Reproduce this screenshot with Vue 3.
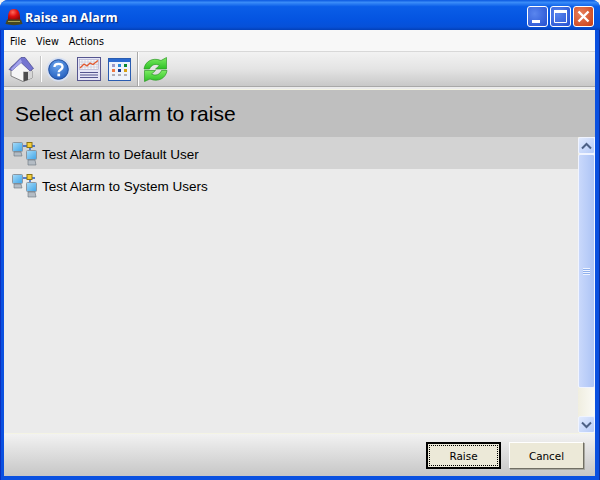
<template>
  <div class="window">
    <div class="title-bar">
      <svg class="alarm-icon" width="18" height="18" viewBox="0 0 18 18">
        <defs>
          <radialGradient id="domeRed" cx="40%" cy="30%" r="75%">
            <stop offset="0" stop-color="#ff6a5a" />
            <stop offset="0.5" stop-color="#e01010" />
            <stop offset="1" stop-color="#8a0808" />
          </radialGradient>
        </defs>
        <path d="M3 12 C2.5 4 5 1 9 1 C13 1 15.5 4 15 12 Z" fill="url(#domeRed)" />
        <path d="M2 11.5 H16 L17.5 16 C12 17.5 6 17.5 0.5 16 Z" fill="#47471f" />
        <path d="M3 13.5 H15" stroke="#a4a45a" />
      </svg>
      <span class="title-text">{{ title }}</span>
      <div class="caption-buttons">
        <div class="caption-btn">
          <svg width="21" height="21" viewBox="0 0 21 21"><rect x="5" y="14" width="8" height="3" fill="#fff" /></svg>
        </div>
        <div class="caption-btn">
          <svg width="21" height="21" viewBox="0 0 21 21"><path d="M4.5 5.5 H16.5 V16.5 H4.5 Z" fill="none" stroke="#fff" /><rect x="4" y="4" width="13" height="3" fill="#fff" /></svg>
        </div>
        <div class="caption-btn close">
          <svg width="21" height="21" viewBox="0 0 21 21"><path d="M5.5 5.5 L15.5 15.5 M15.5 5.5 L5.5 15.5" stroke="#fff" stroke-width="2.4" /></svg>
        </div>
      </div>
    </div>

    <div class="client">
      <div class="menu-bar">
        <span v-for="item in menuItems" :key="item" class="menu-item">{{ item }}</span>
      </div>

      <div class="toolbar">
        <button class="tool">
          <svg width="26" height="26" viewBox="0 0 26 26">
            <path d="M3 11 L13 4 L24 15 L24 22 L15 25.5 L3 20 Z" fill="#f6f6f6" stroke="#6a6a6a" stroke-width="0.8" />
            <path d="M15 15 L24 15 L24 22 L15 25.5 Z" fill="#d6d6d6" />
            <path d="M1 13.5 L13 1.5 L17 1.5 L25.5 12.5 L22 15 L13 6.5 L4 14.5 Z" fill="#7474d0" stroke="#46468e" stroke-width="0.7" />
            <path d="M3 13 L12.5 3 L14 6 L4 14.5 Z" fill="#a2a2ea" />
            <path d="M15.5 16 H20 V24 L15.5 25.5 Z" fill="#4d4d4d" />
          </svg>
        </button>
        <span class="tool-sep short"></span>
        <button class="tool help">
          <svg width="25" height="25" viewBox="0 0 25 25">
            <defs>
              <radialGradient id="helpBlue" cx="45%" cy="30%" r="80%">
                <stop offset="0" stop-color="#6aa6ee" />
                <stop offset="1" stop-color="#1c55b8" />
              </radialGradient>
            </defs>
            <circle cx="12.5" cy="12.5" r="12" fill="#d7e0f2" />
            <circle cx="12.5" cy="12.5" r="9.8" fill="url(#helpBlue)" stroke="#1c4c9e" />
            <path d="M8.5 10 C8.5 5.8 16.5 5.8 16.5 10 C16.5 12.8 12.7 12.6 12.7 15.2" fill="none" stroke="#fff" stroke-width="2.4" />
            <rect x="11.4" y="16.6" width="2.7" height="2.7" fill="#fff" />
          </svg>
        </button>
        <button class="tool report">
          <svg width="24" height="24" viewBox="0 0 24 24">
            <rect x="0.5" y="0.5" width="23" height="23" fill="#e6e6f6" stroke="#55558f" />
            <rect x="2.5" y="2.5" width="19" height="10" fill="#f8f8f8" stroke="#a6a6c8" stroke-width="0.6" />
            <path d="M5 3 V12 M8 3 V12 M11 3 V12 M14 3 V12 M17 3 V12 M20 3 V12 M3 5 H21 M3 7.5 H21 M3 10 H21" stroke="#b4b4cc" stroke-width="0.5" />
            <path d="M3 11 L7 7 L10 9 L13 6 L16 7.5 L21 3.5" fill="none" stroke="#e4582c" stroke-width="1.3" />
            <path d="M3 15.5 H21 M3 18 H21 M3 20.5 H21" stroke="#55558f" />
          </svg>
        </button>
        <button class="tool grid-tool">
          <svg width="23" height="23" viewBox="0 0 23 23">
            <rect x="0.5" y="0.5" width="22" height="22" fill="#eef3fb" stroke="#2a5cb0" />
            <rect x="1" y="1" width="21" height="3" fill="#2a6ad0" />
            <rect x="4" y="6" width="3" height="3" fill="#9a9ac8" /><rect x="10" y="6" width="3" height="3" fill="#2a8ad8" /><rect x="16" y="6" width="3" height="3" fill="#0a8a30" />
            <rect x="4" y="11" width="3" height="3" fill="#f07840" /><rect x="10" y="11" width="3" height="3" fill="#1a3a90" /><rect x="16" y="11" width="3" height="3" fill="#d8a010" />
            <rect x="4" y="16" width="3" height="2" fill="#b0b0b8" /><rect x="10" y="16" width="3" height="2" fill="#b0b0b8" /><rect x="16" y="16" width="3" height="2" fill="#b0b0b8" />
          </svg>
        </button>
        <span class="tool-sep"></span>
        <button class="tool refresh">
          <svg width="25" height="25" viewBox="0 0 25 25">
            <defs>
              <linearGradient id="arrowGreen" x1="0" y1="0" x2="0" y2="1">
                <stop offset="0" stop-color="#7cec62" />
                <stop offset="1" stop-color="#2cc024" />
              </linearGradient>
            </defs>
            <path d="M1 12 C2 4.5 9.5 0 18 3.5 L23.5 0.5 V12 H12.5 L16.5 8.5 C12.5 6 8 8 6.5 12 Z" fill="url(#arrowGreen)" stroke="#2f9a28" stroke-width="0.7" />
            <path d="M24 13.5 C23 21 15.5 25.5 7 22 L1.5 24.5 V13.5 H12.5 L8.5 17 C12.5 19.5 17 17.5 18.5 13.5 Z" fill="url(#arrowGreen)" stroke="#2f9a28" stroke-width="0.7" />
          </svg>
        </button>
      </div>

      <div class="panel-header">Select an alarm to raise</div>

      <div class="list-area">
        <div class="alarm-list">
          <div
            v-for="(alarm, i) in alarms"
            :key="alarm"
            class="alarm-row"
            :class="{ selected: i === 0 }"
          >
            <svg class="net-icon" width="26" height="26" viewBox="0 0 26 26">
              <defs>
                <linearGradient id="screenBlue" x1="0" y1="0" x2="1" y2="1">
                  <stop offset="0" stop-color="#a8dcf8" />
                  <stop offset="1" stop-color="#3ea4e8" />
                </linearGradient>
              </defs>
              <path d="M11 5 H24 M19 5 V10" stroke="#1f5ac8" stroke-width="1.4" />
              <rect x="1.5" y="1.5" width="10" height="9" rx="1" fill="url(#screenBlue)" stroke="#8c96a0" />
              <path d="M3 11 H10 L11 15 H3 Z" fill="#b4bcc4" stroke="#6a747e" stroke-width="0.6" />
              <rect x="16" y="1.5" width="5" height="5" fill="#f6cf3a" stroke="#8a7418" />
              <rect x="15.5" y="9.5" width="10" height="9" rx="1" fill="url(#screenBlue)" stroke="#8c96a0" />
              <path d="M17 19 H24 L25 24 H17 Z" fill="#b4bcc4" stroke="#6a747e" stroke-width="0.6" />
            </svg>
            <span class="alarm-name">{{ alarm }}</span>
          </div>
        </div>

        <div class="scrollbar">
          <div class="arrow-btn">
            <svg width="11" height="8" viewBox="0 0 11 8"><path d="M1 6.5 L5.5 2 L10 6.5" fill="none" stroke="#4d6185" stroke-width="2" /></svg>
          </div>
          <div class="thumb">
            <span class="grip"></span>
          </div>
          <div class="track-fill"></div>
          <div class="arrow-btn">
            <svg width="11" height="8" viewBox="0 0 11 8"><path d="M1 1.5 L5.5 6 L10 1.5" fill="none" stroke="#4d6185" stroke-width="2" /></svg>
          </div>
        </div>
      </div>

      <div class="button-bar">
        <button class="dlg-btn default"><span class="focus-ring">Raise</span></button>
        <button class="dlg-btn"><span class="focus-none">Cancel</span></button>
      </div>
    </div>
  </div>
</template>

<script setup>
const title = 'Raise an Alarm'
const menuItems = ['File', 'View', 'Actions']
const alarms = ['Test Alarm to Default User', 'Test Alarm to System Users']
</script>

<style>
html, body {
  margin: 0;
  background: #f4f4f4;
}
</style>

<style scoped>
.window {
  width: 600px;
  height: 480px;
  box-sizing: border-box;
  display: flex;
  flex-direction: column;
  border-radius: 8px 8px 0 0;
  overflow: hidden;
  background: linear-gradient(90deg, #0a2fc0 0 1px, #0a50e0 1px 599px, #0a2fa0 599px);
  font-family: "Liberation Sans", Arial, sans-serif;
}

.title-bar {
  height: 30px;
  flex: none;
  display: flex;
  align-items: center;
  padding: 3px 6px 0 5px;
  box-sizing: border-box;
  background: linear-gradient(180deg, #0a58e0 0%, #3a8cf8 8%, #0a5ee8 22%, #0453e0 70%, #0650d8 90%, #0340b8 100%);
}

.alarm-icon {
  margin-right: 2px;
  flex: none;
}

.title-text {
  color: #fff;
  font-family: "Open Sans", sans-serif;
  font-size: 12.4px;
  font-weight: 700;
  margin-top: 1px;
  text-shadow: 1px 1px 1px #0a2a80;
}

.caption-buttons {
  margin-left: auto;
  display: flex;
  gap: 2px;
}

.caption-btn {
  width: 21px;
  height: 21px;
  box-sizing: border-box;
  border: 1px solid #fff;
  border-radius: 3px;
  background: radial-gradient(circle at 35% 35%, #5a86ee, #2450d0);
  display: flex;
  align-items: center;
  justify-content: center;
}

.caption-btn svg {
  margin: -1px;
  flex: none;
}

.caption-btn.close {
  background: radial-gradient(circle at 35% 35%, #e8805c, #c83c14);
}

.client {
  flex: 1;
  min-height: 0;
  margin: 0 5px 4px 4px;
  display: flex;
  flex-direction: column;
  background: #ebebeb;
}

.menu-bar {
  height: 22px;
  flex: none;
  box-sizing: border-box;
  display: flex;
  align-items: center;
  gap: 10px;
  padding: 1px 0 0 6px;
  background: #f8f8f8;
  border-bottom: 1px solid #d8d8d8;
}

.menu-item {
  font-family: "DejaVu Sans", sans-serif;
  font-size: 9.6px;
  color: #000;
}

.toolbar {
  height: 35px;
  flex: none;
  box-sizing: border-box;
  display: flex;
  align-items: center;
  padding-left: 4px;
  background: linear-gradient(180deg, #f2f2f2 0%, #e4e4e4 50%, #c8c8c8 100%);
  border-bottom: 1px solid #a8a8a8;
}

.tool {
  border: 0;
  padding: 0;
  background: none;
  display: flex;
}

.tool.help { margin-left: 4px; }
.tool.report { margin-left: 6px; }
.tool.grid-tool { margin-left: 7px; }
.tool.refresh { margin-left: 4px; }

.tool-sep {
  width: 1px;
  height: 34px;
  margin-left: 6px;
  background: #a8a8a8;
  border-right: 1px solid #fff;
}

.tool-sep.short {
  height: 26px;
  background: #c4c4c4;
}

.panel-header {
  height: 48px;
  flex: none;
  margin-top: 2px;
  box-sizing: border-box;
  display: flex;
  align-items: center;
  padding-left: 11px;
  background: #bfbfbf;
  border-top: 1px solid #f4f4e4;
  font-size: 21px;
  color: #000;
}

.list-area {
  flex: 1;
  min-height: 0;
  display: flex;
  background: #ebebeb;
}

.alarm-list {
  flex: 1;
}

.alarm-row {
  height: 32px;
  display: flex;
  align-items: center;
  padding: 2px 0 0 7px;
  box-sizing: border-box;
}

.alarm-row.selected {
  background: #d3d3d3;
}

.net-icon {
  flex: none;
  margin-right: 5px;
}

.alarm-name {
  font-size: 13.5px;
  color: #000;
}

.scrollbar {
  width: 17px;
  flex: none;
  display: flex;
  flex-direction: column;
  background: linear-gradient(90deg, #f0eee0, #fafaf6);
}

.arrow-btn {
  height: 17px;
  flex: none;
  box-sizing: border-box;
  border: 1px solid #f0f4ff;
  border-radius: 2px;
  background: linear-gradient(135deg, #e2ebfe, #b6cbf8);
  display: flex;
  align-items: center;
  justify-content: center;
}

.thumb {
  height: 234px;
  flex: none;
  box-sizing: border-box;
  border: 1px solid #f0f4ff;
  border-radius: 2px;
  background: linear-gradient(90deg, #c9d8fb, #b8ccf8 60%, #aec4f4);
  display: flex;
  align-items: center;
  justify-content: center;
}

.grip {
  width: 7px;
  height: 7px;
  background: repeating-linear-gradient(180deg, #eef3ff 0 1px, #8fb0ec 1px 2px);
}

.track-fill {
  flex: 1;
}

.button-bar {
  height: 43px;
  flex: none;
  box-sizing: border-box;
  display: flex;
  justify-content: flex-end;
  align-items: center;
  gap: 8px;
  padding: 1px 11px 0 0;
  background: linear-gradient(180deg, #f2f2f2, #c6c6c6);
  border-top: 1px solid #f4f4e4;
}

.dlg-btn {
  width: 75px;
  height: 27px;
  padding: 0;
  box-sizing: border-box;
  background: #ece9d8;
  border: 1px solid;
  border-color: #fff #716f64 #716f64 #fff;
  box-shadow: 1px 1px 0 #a8a8a0;
  font-family: "DejaVu Sans", sans-serif;
  font-size: 10.4px;
  color: #000;
  display: flex;
}

.dlg-btn.default {
  border: 2px solid #000;
  box-shadow: none;
}

.focus-ring,
.focus-none {
  flex: 1;
  display: flex;
  align-items: center;
  justify-content: center;
}

.focus-ring {
  margin: 1px;
  border: 1px dotted #000;
}
</style>
